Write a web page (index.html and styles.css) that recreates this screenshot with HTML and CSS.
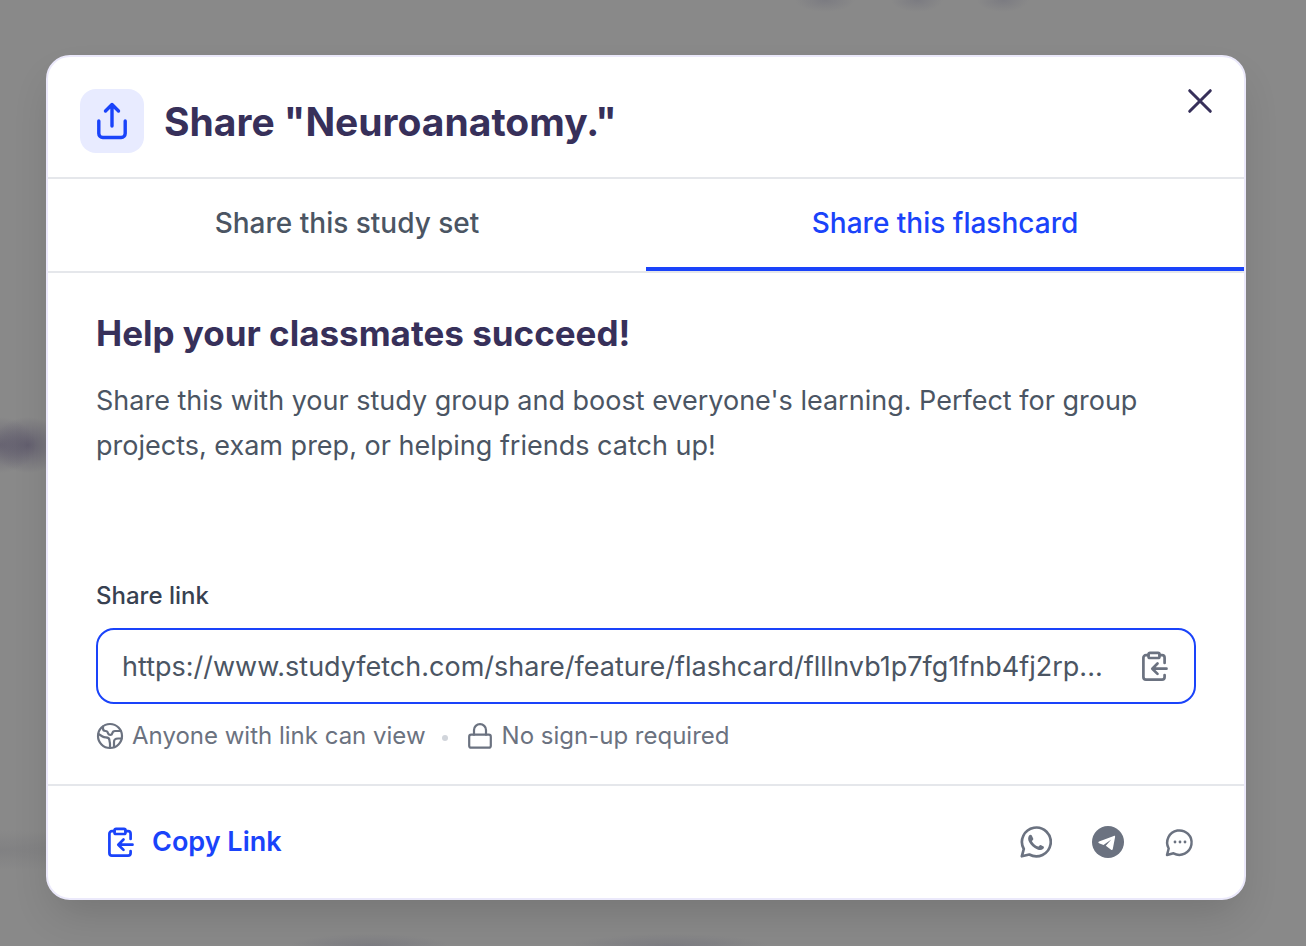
FILE: index.html
```html
<!DOCTYPE html>
<html lang="en">
<head>
  <meta charset="UTF-8">
  <title>Share "Neuroanatomy."</title>
  <link rel="stylesheet" href="styles.css">
</head>
<body>

<div class="modal" role="dialog" aria-labelledby="modalTitle">
  <header class="modal-header">
    <span class="share-badge">
      <svg width="40" height="40" viewBox="0 0 40 40" fill="none" stroke="currentColor" stroke-width="3.400" stroke-linecap="round" stroke-linejoin="round">
        <path d="M20 25V3.500M13.500 10L20 3.500l6.500 6.500M6.800 20v12.500a4 4 0 0 0 4 4h18.400a4 4 0 0 0 4-4V20"/>
      </svg>
    </span>
    <h1 id="modalTitle">Share "Neuroanatomy."</h1>
    <button type="button" class="close-btn" aria-label="Close">
      <svg width="32" height="32" viewBox="0 0 32 32" fill="none" stroke="currentColor" stroke-width="3" stroke-linecap="round">
        <path d="M5.700 5.700l20.600 20.600M26.300 5.700L5.700 26.300"/>
      </svg>
    </button>
  </header>

  <div class="tabs" role="tablist">
    <button type="button" class="tab" role="tab" aria-selected="false">Share this study set</button>
    <button type="button" class="tab active" role="tab" aria-selected="true">Share this flashcard</button>
  </div>

  <main class="modal-body">
    <h2>Help your classmates succeed!</h2>
    <p class="intro">Share this with your study group and boost everyone's learning. Perfect for group projects, exam prep, or helping friends catch up!</p>

    <label for="shareLink">Share link</label>
    <div class="link-box">
      <input type="text" id="shareLink" value="https://www.studyfetch.com/share/feature/flashcard/flllnvb1p7fg1fnb4fj2rp..." readonly>
      <button type="button" class="icon-btn" aria-label="Copy share link">
        <svg width="32" height="32" viewBox="0 0 32 32" fill="none" stroke="currentColor" stroke-width="2.700" stroke-linecap="round" stroke-linejoin="round">
          <rect x="10.500" y="2.800" width="11" height="5.200" rx="1.500"/>
          <path d="M10.500 5.200H8a2.600 2.600 0 0 0-2.600 2.600V27A2.600 2.600 0 0 0 8 29.600h16a2.600 2.600 0 0 0 2.600-2.600v-2M21.500 5.200H24a2.600 2.600 0 0 1 2.600 2.600V13M28.500 18.700h-14M19.500 13.500l-5.200 5.200 5.200 5.200"/>
        </svg>
      </button>
    </div>

    <ul class="notes">
      <li>
        <svg width="28" height="28" viewBox="0 0 28 28" fill="none" stroke="currentColor" stroke-width="2.200" stroke-linecap="round" stroke-linejoin="round">
          <circle cx="14" cy="14" r="12"/>
          <path d="M7 4.500v2a2.500 2.500 0 0 0 2.500 2.500c1.800 0 2.200 1 2.500 2.300.5 2 3.800 2.200 4.200.2.300-1.500 1-2.500 2.800-2.500h5.800M2.500 12l4 2.500c1 .6 2 .8 3.200.8 2.500 0 3.800 1.200 3.800 3.200 0 1.200.5 2 .5 3.500v4M25.500 16.500h-3.500c-2.500 0-4 1.500-4 3.500V25"/>
        </svg>
        Anyone with link can view
      </li>
      <li>
        <svg width="28" height="28" viewBox="0 0 28 28" fill="none" stroke="currentColor" stroke-width="2.200" stroke-linecap="round" stroke-linejoin="round">
          <rect x="3.200" y="12.700" width="21.600" height="13" rx="2"/>
          <path d="M8 12.700V8a6 5.800 0 0 1 12 0v4.700"/>
        </svg>
        No sign-up required
      </li>
    </ul>
  </main>

  <footer class="modal-footer">
    <button type="button" class="copy-btn">
      <svg width="32" height="32" viewBox="0 0 32 32" fill="none" stroke="currentColor" stroke-width="2.700" stroke-linecap="round" stroke-linejoin="round">
        <rect x="10.500" y="2.800" width="11" height="5.200" rx="1.500"/>
        <path d="M10.500 5.200H8a2.600 2.600 0 0 0-2.600 2.600V27A2.600 2.600 0 0 0 8 29.600h16a2.600 2.600 0 0 0 2.600-2.600v-2M21.500 5.200H24a2.600 2.600 0 0 1 2.600 2.600V13M28.500 18.700h-14M19.500 13.500l-5.200 5.200 5.200 5.200"/>
      </svg>
      Copy Link
    </button>
    <div class="socials">
      <a href="#" aria-label="Share on WhatsApp">
        <svg width="32" height="32" viewBox="0 0 32 32">
          <path fill="none" stroke="currentColor" stroke-width="2.700" stroke-linejoin="round" d="M1.800 30.300l2-7.300A14.400 14.400 0 1 1 9.300 28.500z"/>
          <path fill="currentColor" d="M9.300 9.300c.6-.7 2-.8 2.500.2l1.500 3.300c.3.800-1.200 2-1.400 2.500 1.500 2.700 3.500 4.300 6.200 5.300.6 0 1.800-1.800 2.500-1.700l3 1.500c.8.500.2 2-.6 2.700-1.400 1.200-3.300 1.300-5.500.4-4-1.500-6.700-4.300-8.400-7.400-1.300-2.500-1.300-5 .2-6.800z"/>
        </svg>
      </a>
      <a href="#" aria-label="Share on Telegram">
        <svg width="32" height="32" viewBox="0 0 32 32">
          <circle cx="16" cy="16" r="16" fill="currentColor"/>
          <path fill="#fff" d="M7 15.600l14.800-5.700c.9-.3 1.500.2 1.300 1.200l-2.300 12c-.2 1-.9 1.200-1.700.7l-5.300-4 5.500-6.300-7.800 5.400-4.500-1.600c-.9-.4-.9-1.300 0-1.700z"/>
        </svg>
      </a>
      <a href="#" aria-label="Share by message">
        <svg width="32" height="32" viewBox="0 0 32 32">
          <path fill="none" stroke="currentColor" stroke-width="2.500" stroke-linejoin="round" d="M3 29l1.700-6.500A12.200 12.200 0 1 1 9.500 27.300z"/>
          <g fill="currentColor"><circle cx="11" cy="16" r="1.400"/><circle cx="16" cy="16" r="1.400"/><circle cx="21" cy="16" r="1.400"/></g>
        </svg>
      </a>
    </div>
  </footer>
</div>

</body>
</html>
```

FILE: styles.css
```css
* { box-sizing: border-box; }
body {
  margin: 0; min-height: 100vh; padding: 55px 60px 46px 46px; display: flex;
  font-family: Inter, "Liberation Sans", sans-serif; color: #4b5563;
  background:
    radial-gradient(ellipse 36px 28px at 28px 445px, rgba(78,72,96,0.6), transparent),
    radial-gradient(ellipse 36px 28px at 0 445px, rgba(78,72,96,0.5), transparent),
    radial-gradient(ellipse 30px 12px at 825px 0, rgba(98,98,115,0.35), transparent),
    radial-gradient(ellipse 26px 12px at 917px 0, rgba(98,98,115,0.35), transparent),
    radial-gradient(ellipse 26px 12px at 1003px 0, rgba(98,98,115,0.35), transparent),
    radial-gradient(ellipse 80px 12px at 370px 100%, rgba(98,98,115,0.35), transparent),
    radial-gradient(ellipse 100px 12px at 670px 100%, rgba(98,98,115,0.35), transparent),
    radial-gradient(ellipse 160px 20px at 0 850px, rgba(110,110,115,0.3), transparent),
    #898989;
}
h1, h2, p, ul { margin: 0; padding: 0; }
h1, h2 { color: #37305a; font-weight: 700; }
button, input { font: inherit; color: inherit; background: none; border: none; padding: 0; }
button { cursor: pointer; }
svg { display: block; flex: none; }

.modal {
  flex: 1; min-width: 0; display: flex; flex-direction: column; background: #fff;
  border: 2px solid #ebe9fb; border-radius: 24px; box-shadow: 0 20px 40px -8px rgba(0,0,0,0.15);
}

.modal-header {
  display: flex; align-items: flex-start; gap: 20px; padding: 32px 28px 24px 32px;
  border-bottom: 2px solid #e5e7eb;
}
.share-badge {
  display: grid; place-items: center; width: 64px; height: 64px;
  background: #e8ebff; color: #1a43fa; border-radius: 16px;
}
h1 { flex: 1; font-size: 39px; line-height: 66px; height: 64px; }
.close-btn { color: #37305a; margin-top: -4px; }

.tabs { display: grid; grid-template-columns: 1fr 1fr; border-bottom: 2px solid #e5e7eb; }
.tab { height: 92px; font-size: 28px; font-weight: 500; border-bottom: 4px solid transparent; }
.tab.active { color: #1a43fa; border-color: #1a43fa; }

.modal-body { flex: 1; padding: 36px 48px 32px; }
h2 { font-size: 35px; line-height: 48px; }
.intro { margin-top: 21px; font-size: 27px; line-height: 45px; }
.modal-body label {
  display: block; margin-top: 112px; font-size: 24px; line-height: 32px; font-weight: 500; color: #374151;
}
.link-box {
  display: flex; align-items: center; gap: 24px; height: 76px; margin-top: 16px; padding: 0 24px;
  border: 2px solid #1a43fa; border-radius: 18px;
}
.link-box input { flex: 1; min-width: 0; font-size: 27px; outline: none; }
.icon-btn { color: #6b7280; }
.notes {
  display: flex; align-items: center; margin-top: 16px; list-style: none;
  font-size: 24px; line-height: 32px; color: #6b7280;
}
.notes li { display: flex; align-items: center; gap: 8px; }
.notes li + li::before {
  content: ""; width: 6px; height: 6px; margin: 4px 10px 0 16px; border-radius: 50%; background: #d1d5db;
}

.modal-footer {
  display: flex; align-items: center; justify-content: space-between;
  padding: 36px 48px; border-top: 2px solid #e5e7eb;
}
.copy-btn {
  display: flex; align-items: center; gap: 16px; padding-left: 8px;
  font-size: 27px; line-height: 40px; font-weight: 600; color: #1a43fa;
}
.socials { display: flex; gap: 40px; color: #6b7280; }
.socials a { color: inherit; }
```
